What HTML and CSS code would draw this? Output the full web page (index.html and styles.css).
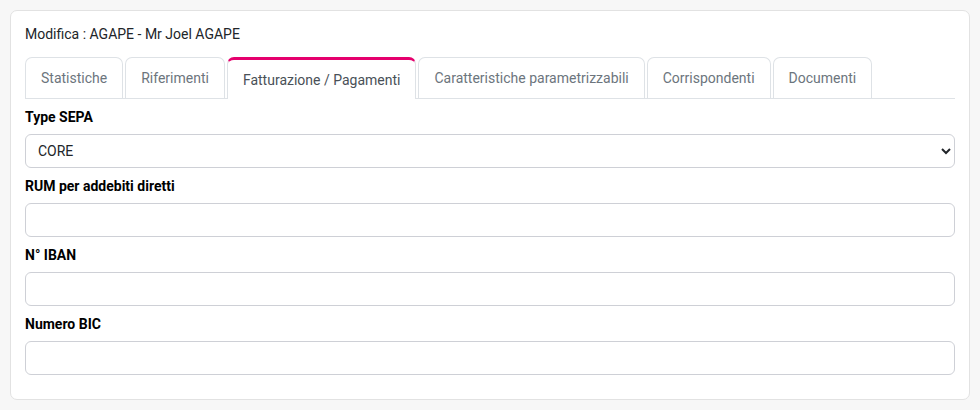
FILE: index.html
```html
<!DOCTYPE html>
<html>
<head>
<meta charset="utf-8">
<link rel="stylesheet" href="styles.css">
</head>
<body>
<div class="card">
  <div class="title">Modifica : AGAPE - Mr Joel AGAPE</div>
  <ul class="tabs">
    <li class="tab">Statistiche</li>
    <li class="tab">Riferimenti</li>
    <li class="tab active">Fatturazione / Pagamenti</li>
    <li class="tab">Caratteristiche parametrizzabili</li>
    <li class="tab">Corrispondenti</li>
    <li class="tab">Documenti</li>
  </ul>
  <div class="form">
    <div class="group">
      <label class="label">Type SEPA</label>
      <select class="control select"><option>CORE</option></select>
    </div>
    <div class="group">
      <label class="label">RUM per addebiti diretti</label>
      <input class="control" type="text">
    </div>
    <div class="group">
      <label class="label">N° IBAN</label>
      <input class="control" type="text">
    </div>
    <div class="group">
      <label class="label">Numero BIC</label>
      <input class="control" type="text">
    </div>
  </div>
</div>
</body>
</html>
```
FILE: styles.css
```css
html, body {
  margin: 0;
  padding: 0;
  background: #f7f7f7;
  font-family: Roboto, "Liberation Sans", sans-serif;
  font-size: 14px;
  color: #212529;
}
body {
  padding: 10px;
}
.card {
  width: 960px;
  box-sizing: border-box;
  background: #fff;
  border: 1px solid #e2e2e2;
  border-radius: 7px;
  padding: 13px 14px 24px 14px;
}
.title {
  font-size: 14px;
  line-height: 20px;
  color: #212529;
  margin-bottom: 13px;
}
.tabs {
  list-style: none;
  margin: 0;
  padding: 0;
  display: flex;
  align-items: flex-start;
  gap: 2px;
  border-bottom: 1px solid #dee2e6;
}
.tab {
  height: 41px;
  box-sizing: border-box;
  padding: 0 15px;
  display: flex;
  align-items: center;
  border: 1px solid #dee2e6;
  border-bottom: none;
  border-radius: 7px 7px 0 0;
  color: #6c757d;
  font-size: 14px;
}
.tab.active {
  color: #495057;
  border-top: 3px solid #e5006d;
  margin-bottom: -1px;
  height: 42px;
  background: #fff;
}
.form {
  padding-top: 8px;
}
.group {
  display: flex;
  flex-direction: column;
  margin-bottom: 8px;
}
.group:last-child { margin-bottom: 0; }
.label {
  font-weight: bold;
  font-size: 14px;
  line-height: 20px;
  color: #000;
  margin-bottom: 7px;
}
.control {
  height: 34px;
  box-sizing: border-box;
  border: 1px solid #ced0d6;
  border-radius: 6px;
  background: #fff;
  font-family: Roboto, "Liberation Sans", sans-serif;
  font-size: 14px;
  color: #212529;
  padding: 0 10px;
  width: 100%;
  outline: none;
}
.select {
  padding-left: 8px;
}
```
